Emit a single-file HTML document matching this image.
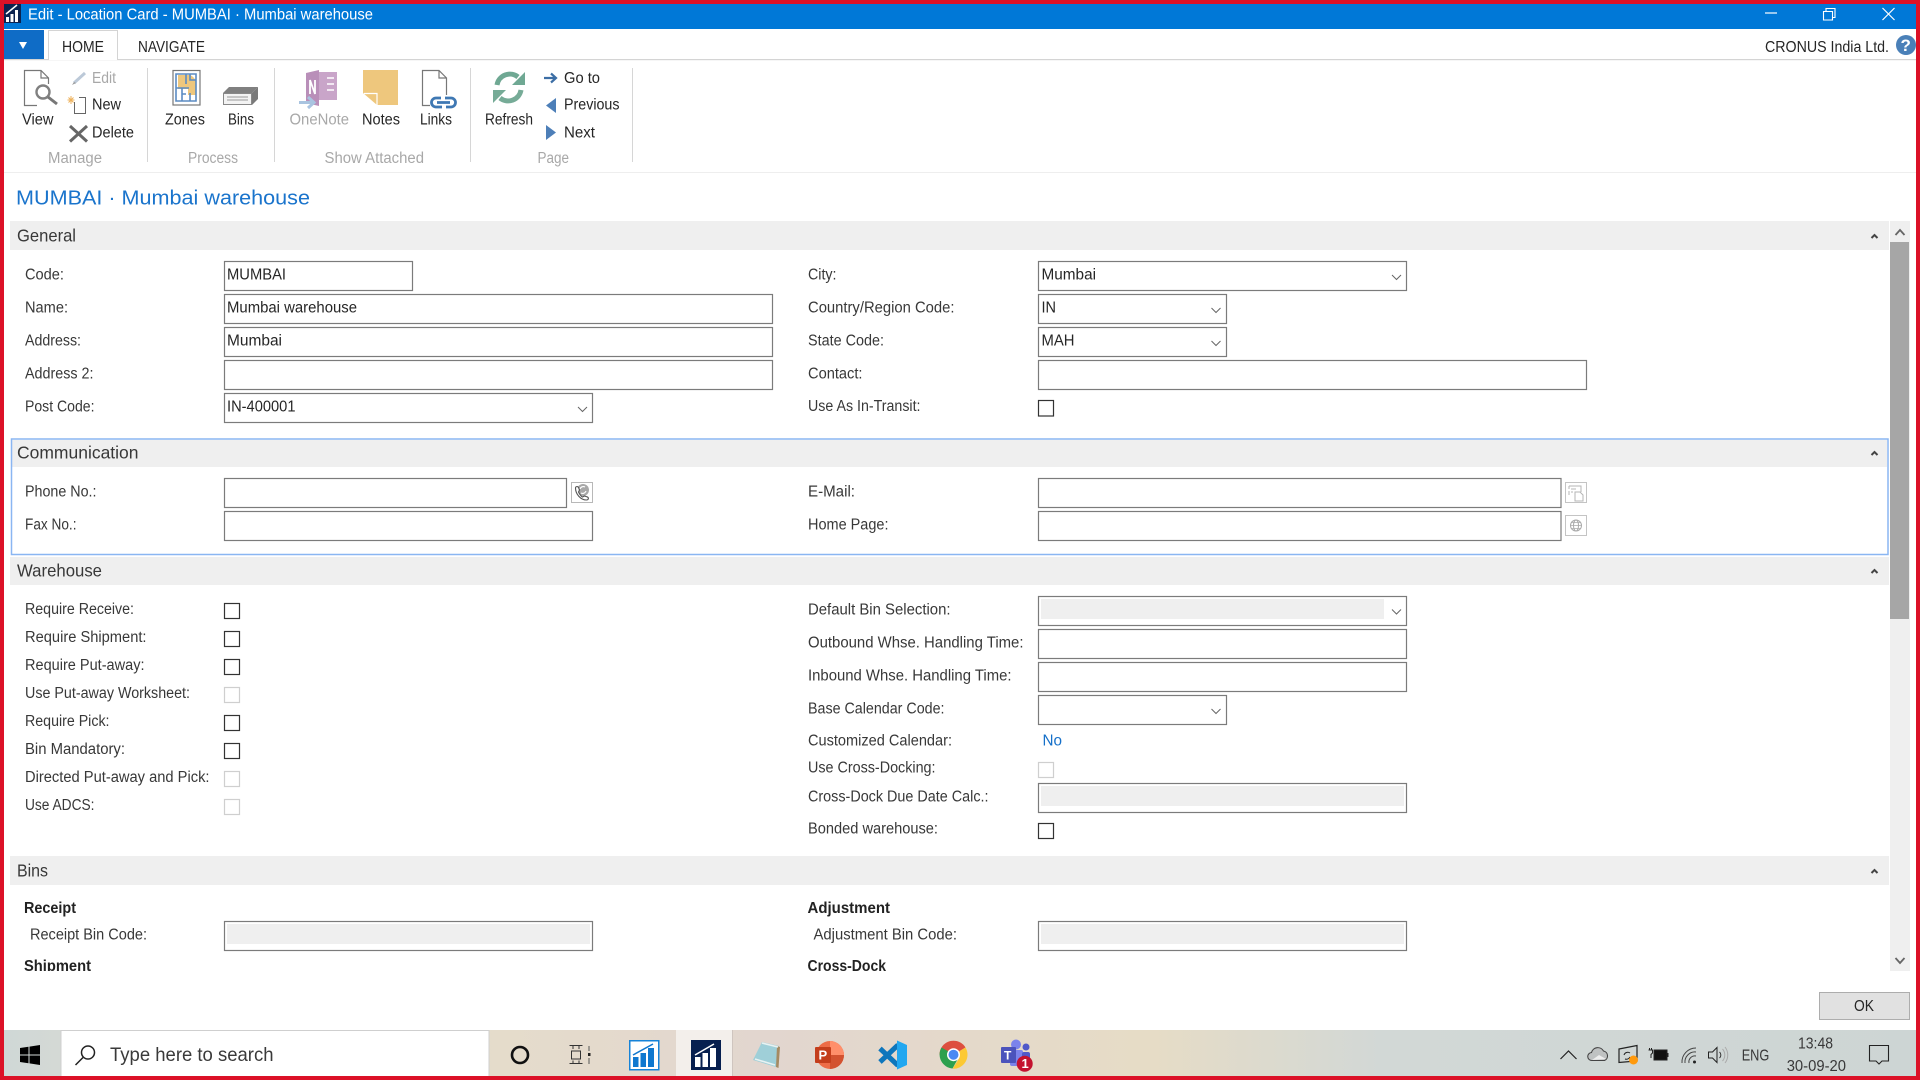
<!DOCTYPE html>
<html lang="en"><head><meta charset="utf-8"><title>Edit - Location Card</title>
<style>
html,body{margin:0;padding:0;background:#fff;width:1920px;height:1080px;overflow:hidden}
svg{display:block;position:absolute;left:0;top:0}
text{font-family:"Liberation Sans",sans-serif;font-size:15.5px;fill:#383838;transform:translateY(-.4px)}
.g{fill:#a8a8a8}.k{fill:#262626}
.h{font-size:17.5px;fill:#383838}
.b{font-weight:bold;fill:#222}
.f{fill:#fff;stroke:#7b7b7b;stroke-width:1.2}
.c{fill:#fff;stroke:#333;stroke-width:1.2}
.d{fill:#fff;stroke:#cfcfcf;stroke-width:1.2}
.v{fill:none;stroke:#666;stroke-width:1}
.u{fill:none;stroke:#444;stroke-width:2}
.w{fill:#efefef}
</style></head><body>
<svg width="1920" height="1080" viewBox="0 0 1920 1080" xmlns="http://www.w3.org/2000/svg">
<defs><linearGradient id="tb" x1="0" x2="1" y1="0" y2="0">
<stop offset="0" stop-color="#cfd7d6"/><stop offset=".03" stop-color="#d4d9d5"/><stop offset=".26" stop-color="#e5dccb"/><stop offset=".40" stop-color="#e2d6cf"/><stop offset=".6" stop-color="#e6dcc6"/><stop offset=".72" stop-color="#d2d8d6"/><stop offset="1" stop-color="#cdd5d4"/></linearGradient></defs>
<rect width="1920" height="1080" fill="#fff"/>
<!-- title bar -->
<rect x="0" y="4" width="1920" height="25" fill="#0078d7"/>
<rect x="4" y="4" width="17" height="19" fill="#0b2350"/>
<path d="M6 22v-5h3v5zM10.500 22v-8h3v8zM15 22V10h3v12z" fill="#fff"/><path d="M6 14l11-9" stroke="#fff" stroke-width="1.500"/>
<text x="28" y="20" textLength="345" lengthAdjust="spacingAndGlyphs" style="fill:#fff">Edit - Location Card - MUMBAI · Mumbai warehouse</text>
<path d="M1765 13h12" stroke="#fff" stroke-width="1.200"/>
<path d="M1823.500 11.500h9v8.500h-9zM1826 11.500v-3h9v9h-2.500" fill="none" stroke="#fff" stroke-width="1.100"/>
<path d="M1882.500 8l12 12M1894.500 8l-12 12" stroke="#fff" stroke-width="1.200"/>
<!-- tabs -->
<rect x="0" y="59" width="1920" height="1.200" fill="#d4d4d4"/>
<rect x="4" y="30" width="40" height="29" fill="#0f6cc6"/><path d="M19 42h8l-4 7z" fill="#fff"/>
<path d="M48.500 60V30.500H117.500V60" fill="#fff" stroke="#d4d4d4"/>
<text x="62" y="52.500" textLength="42" lengthAdjust="spacingAndGlyphs" class="k">HOME</text>
<text x="138" y="52.500" textLength="67" lengthAdjust="spacingAndGlyphs" class="k">NAVIGATE</text>
<text x="1765" y="52.500" textLength="124" lengthAdjust="spacingAndGlyphs" class="k">CRONUS India Ltd.</text>
<circle cx="1906" cy="45" r="10" fill="#4a80b8"/><text x="1900.500" y="51.500" style="font-size:17px;font-weight:bold;fill:#fff">?</text>
<!-- ribbon -->
<path d="M147.500 68v94M274.500 68v94M470.500 68v94M632.500 68v94" stroke="#d6d6d6" stroke-width="1"/>
<rect x="4" y="172" width="1912" height="1" fill="#eeeeee"/>
<path d="M37 105.500H24.500V70.500H41L48.500 78V84M41 70.500V78H48.500" fill="none" stroke="#777" stroke-width="1.200"/>
<circle cx="43" cy="92" r="6.500" fill="#fff" stroke="#808080" stroke-width="2.400"/><path d="M48 97l9 7" stroke="#777" stroke-width="3"/>
<text x="22" y="125" textLength="31.500" lengthAdjust="spacingAndGlyphs" class="k">View</text>
<path d="M74 83l11-10" stroke="#bcc9d8" stroke-width="3"/><path d="M72 85l2-3 2 1z" fill="#999"/>
<text x="92" y="83.500" textLength="24" lengthAdjust="spacingAndGlyphs" class="g">Edit</text>
<path d="M74.500 102V113.500H85.500V97.500H79" fill="none" stroke="#666"/><path d="M71 96v8M67.500 100h7M68.500 97.500l5 5M73.500 97.500l-5 5" stroke="#eeb25c" stroke-width="1"/>
<text x="92" y="110" textLength="29" lengthAdjust="spacingAndGlyphs" class="k">New</text>
<path d="M70 126l17 15.500M87 126l-17 15.500" stroke="#666" stroke-width="3"/>
<text x="92" y="138" textLength="42" lengthAdjust="spacingAndGlyphs" class="k">Delete</text>
<text x="48" y="163.500" textLength="54" lengthAdjust="spacingAndGlyphs" class="g">Manage</text>
<!-- zones -->
<rect x="173" y="70.500" width="27" height="34.500" fill="#fff" stroke="#777" stroke-width="1.200"/>
<path d="M178 75h12a9 9 0 0 1 6 8v12h-8v-6h-10z" fill="#eec77d"/>
<path d="M176 74h20v27h-20zM176 88h13M186 74v10M190 74v6h6M182 88v13M190 93v8M182 94h4" fill="none" stroke="#5b8bc2" stroke-width="1.600"/>
<text x="165" y="125" textLength="40" lengthAdjust="spacingAndGlyphs" class="k">Zones</text>
<path d="M223 93l6-6h29l-6 6z" fill="#808080"/><path d="M252 93l6-6v12l-6 6z" fill="#7a7a7a"/>
<rect x="223.500" y="93.500" width="28" height="11" fill="#f3f3f3" stroke="#888"/><path d="M227 97h21M227 100h21" stroke="#999"/>
<text x="228" y="125" textLength="26" lengthAdjust="spacingAndGlyphs" class="k">Bins</text>
<text x="188" y="163.500" textLength="50" lengthAdjust="spacingAndGlyphs" class="g">Process</text>
<!-- onenote -->
<path d="M318 72h19v28h-19z" fill="#c9a5c9"/><path d="M306 73l13-3v36l-13-3z" fill="#b98fb9"/><path d="M310 94V80l5 14V80" fill="none" stroke="#fff" stroke-width="1.800"/>
<path d="M327 78h7M327 84h7M327 90h7" stroke="#fff" stroke-width="1.500"/>
<path d="M299 102.500h13M308 97l6 5.500-6 5.500" fill="none" stroke="#a9c4e0" stroke-width="3"/>
<text x="289.500" y="125" textLength="59.500" lengthAdjust="spacingAndGlyphs" class="g">OneNote</text>
<path d="M363 70H398V105H377L363 93Z" fill="#eec77d"/><path d="M377 105V93.500H364" fill="none" stroke="#fff" stroke-width="1.200"/>
<text x="362" y="125" textLength="38" lengthAdjust="spacingAndGlyphs" class="k">Notes</text>
<path d="M430 105.500H422.500V70.500H439L446.500 78V95M439 70.500V78H446.500" fill="none" stroke="#777" stroke-width="1.200"/>
<path d="M441 98h-5a4.500 4.500 0 0 0 0 9h6M446 107h5a4.500 4.500 0 0 0 0-9h-6M437 102.500h13" fill="none" stroke="#3f78b3" stroke-width="2.800"/>
<text x="420" y="125" textLength="32" lengthAdjust="spacingAndGlyphs" class="k">Links</text>
<text x="324.500" y="163.500" textLength="99.500" lengthAdjust="spacingAndGlyphs" class="g">Show Attached</text>
<!-- refresh -->
<path d="M497 85a13 13 0 0 1 21-8" fill="none" stroke="#6fa893" stroke-width="5"/><path d="M525 72v13h-13z" fill="#6fa893"/>
<path d="M521 90a13 13 0 0 1-21 8" fill="none" stroke="#76ab97" stroke-width="5"/><path d="M493 103V90h13z" fill="#76ab97"/>
<text x="485" y="125" textLength="48" lengthAdjust="spacingAndGlyphs" class="k">Refresh</text>
<path d="M544 78h11M551 73.500l5 4.500-5 4.500" fill="none" stroke="#3c6ea5" stroke-width="2.200"/>
<text x="564" y="83.500" textLength="36" lengthAdjust="spacingAndGlyphs" class="k">Go to</text>
<path d="M546 105.500l10-7.500v15z" fill="#4d7fb8"/>
<text x="564" y="110" textLength="55.500" lengthAdjust="spacingAndGlyphs" class="k">Previous</text>
<path d="M546 125l10 7.500-10 7.500z" fill="#4d7fb8"/>
<text x="564" y="138" textLength="31" lengthAdjust="spacingAndGlyphs" class="k">Next</text>
<text x="537.500" y="163.500" textLength="31.500" lengthAdjust="spacingAndGlyphs" class="g">Page</text>
<text x="16" y="204.800" textLength="294" lengthAdjust="spacingAndGlyphs" style="font-size:20.500px;fill:#1a74cc">MUMBAI · Mumbai warehouse</text>
<!-- section headers -->
<rect class="w" x="10" y="221" width="1879" height="29"/>
<rect class="w" x="12" y="440" width="1875" height="27"/>
<rect class="w" x="10" y="557" width="1879" height="28"/>
<rect class="w" x="10" y="856" width="1879" height="29"/>
<rect x="11.500" y="439" width="1876.500" height="115.500" fill="none" stroke="#8ab6f2" stroke-width="1.500"/>
<text class="h" x="17" y="242" textLength="59" lengthAdjust="spacingAndGlyphs">General</text>
<text class="h" x="17" y="459" textLength="121.500" lengthAdjust="spacingAndGlyphs">Communication</text>
<text class="h" x="17" y="577" textLength="85" lengthAdjust="spacingAndGlyphs">Warehouse</text>
<text class="h" x="17" y="877" textLength="31" lengthAdjust="spacingAndGlyphs">Bins</text>
<path class="u" d="M1871.500 238l3-3 3 3M1871.500 455l3-3 3 3M1871.500 573l3-3 3 3M1871.500 873l3-3 3 3"/>
<!-- general -->
<text x="25" y="280" textLength="39" lengthAdjust="spacingAndGlyphs">Code:</text>
<text x="25" y="313" textLength="43" lengthAdjust="spacingAndGlyphs">Name:</text>
<text x="25" y="346" textLength="56" lengthAdjust="spacingAndGlyphs">Address:</text>
<text x="25" y="379" textLength="68.500" lengthAdjust="spacingAndGlyphs">Address 2:</text>
<text x="25" y="412" textLength="69.500" lengthAdjust="spacingAndGlyphs">Post Code:</text>
<rect class="f" x="224.500" y="261.500" width="188" height="29"/>
<rect class="f" x="224.500" y="294.500" width="548" height="29"/>
<rect class="f" x="224.500" y="327.500" width="548" height="29"/>
<rect class="f" x="224.500" y="360.500" width="548" height="29"/>
<rect class="f" x="224.500" y="393.500" width="368" height="29"/>
<text class="k" x="227" y="280" textLength="59" lengthAdjust="spacingAndGlyphs">MUMBAI</text>
<text class="k" x="227" y="313" textLength="130" lengthAdjust="spacingAndGlyphs">Mumbai warehouse</text>
<text class="k" x="227" y="346" textLength="55" lengthAdjust="spacingAndGlyphs">Mumbai</text>
<text class="k" x="227" y="412" textLength="68.500" lengthAdjust="spacingAndGlyphs">IN-400001</text>
<path class="v" d="M578 407l4.500 4.500 4.500-4.500"/>
<text x="808" y="280" textLength="28.500" lengthAdjust="spacingAndGlyphs">City:</text>
<text x="808" y="313" textLength="146.500" lengthAdjust="spacingAndGlyphs">Country/Region Code:</text>
<text x="808" y="346" textLength="76" lengthAdjust="spacingAndGlyphs">State Code:</text>
<text x="808" y="379" textLength="54.500" lengthAdjust="spacingAndGlyphs">Contact:</text>
<text x="808" y="411.500" textLength="112.500" lengthAdjust="spacingAndGlyphs">Use As In-Transit:</text>
<rect class="f" x="1038.500" y="261.500" width="368" height="29"/>
<rect class="f" x="1038.500" y="294.500" width="188" height="29"/>
<rect class="f" x="1038.500" y="327.500" width="188" height="29"/>
<rect class="f" x="1038.500" y="360.500" width="548" height="29"/>
<text class="k" x="1041.500" y="280" textLength="54.500" lengthAdjust="spacingAndGlyphs">Mumbai</text>
<text class="k" x="1041.500" y="313" textLength="14.500" lengthAdjust="spacingAndGlyphs">IN</text>
<text class="k" x="1041.500" y="346" textLength="33" lengthAdjust="spacingAndGlyphs">MAH</text>
<path class="v" d="M1392 275l4.500 4.500 4.500-4.500M1211.500 308l4.500 4.500 4.500-4.500M1211.500 341l4.500 4.500 4.500-4.500"/>
<rect class="c" x="1038.500" y="400.500" width="15" height="15.500"/>
<!-- communication -->
<text x="25" y="497" textLength="71.500" lengthAdjust="spacingAndGlyphs">Phone No.:</text>
<text x="25" y="530" textLength="51.500" lengthAdjust="spacingAndGlyphs">Fax No.:</text>
<rect class="f" x="224.500" y="478.500" width="342" height="29"/>
<rect class="f" x="224.500" y="511.500" width="368" height="29"/>
<rect x="571.500" y="482.500" width="21" height="20" fill="#fff" stroke="#b8b8b8"/>
<circle cx="583" cy="490" r="6" fill="#a8a8a8"/><path d="M580 489a3.500 3.500 0 0 1 5-2M586 491a3.500 3.500 0 0 1-5 2" fill="none" stroke="#fff" stroke-width="1.200"/>
<path d="M575.500 488c0 6 5 12 11 12 2 0 2.500-2 1-3l-3-1-2 1c-2-1-3-3-4-5l1-2-1-2.500c-1-1.500-3-1-3 .5z" fill="#fff" stroke="#555" stroke-width="1.100"/>
<text x="808" y="497" textLength="47" lengthAdjust="spacingAndGlyphs">E-Mail:</text>
<text x="808" y="530" textLength="80.500" lengthAdjust="spacingAndGlyphs">Home Page:</text>
<rect class="f" x="1038.500" y="478.500" width="522.500" height="29"/>
<rect class="f" x="1038.500" y="511.500" width="522.500" height="29"/>
<rect x="1565.500" y="482.500" width="21" height="20" fill="#fff" stroke="#c4c4c4"/>
<path d="M1569 486h12v6M1569 486v3M1569 491v4M1571 489h5M1571 492h2M1575 492h5l3 3v6h-8z" fill="none" stroke="#b5b5b5"/>
<rect x="1565.500" y="515.500" width="21" height="20" fill="#fff" stroke="#c4c4c4"/>
<circle cx="1576" cy="525.500" r="5.500" fill="none" stroke="#aaa"/><ellipse cx="1576" cy="525.500" rx="2.500" ry="5.500" fill="none" stroke="#aaa"/><path d="M1570.500 525.500h11M1571.500 522.500h9M1571.500 528.500h9" stroke="#aaa" stroke-width=".8"/>
<!-- warehouse left -->
<text x="25" y="614.500" textLength="109" lengthAdjust="spacingAndGlyphs">Require Receive:</text>
<text x="25" y="642.500" textLength="121.500" lengthAdjust="spacingAndGlyphs">Require Shipment:</text>
<text x="25" y="670.500" textLength="119.500" lengthAdjust="spacingAndGlyphs">Require Put-away:</text>
<text x="25" y="698.500" textLength="165" lengthAdjust="spacingAndGlyphs">Use Put-away Worksheet:</text>
<text x="25" y="726.500" textLength="84.500" lengthAdjust="spacingAndGlyphs">Require Pick:</text>
<text x="25" y="754.500" textLength="100" lengthAdjust="spacingAndGlyphs">Bin Mandatory:</text>
<text x="25" y="782.500" textLength="184.500" lengthAdjust="spacingAndGlyphs">Directed Put-away and Pick:</text>
<text x="25" y="810.500" textLength="69.500" lengthAdjust="spacingAndGlyphs">Use ADCS:</text>
<rect class="c" x="224.500" y="603.500" width="15" height="15"/>
<rect class="c" x="224.500" y="631.500" width="15" height="15"/>
<rect class="c" x="224.500" y="659.500" width="15" height="15"/>
<rect class="d" x="224.500" y="687.500" width="15" height="15"/>
<rect class="c" x="224.500" y="715.500" width="15" height="15"/>
<rect class="c" x="224.500" y="743.500" width="15" height="15"/>
<rect class="d" x="224.500" y="771.500" width="15" height="15"/>
<rect class="d" x="224.500" y="799.500" width="15" height="15"/>
<!-- warehouse right -->
<text x="808" y="615" textLength="142.500" lengthAdjust="spacingAndGlyphs">Default Bin Selection:</text>
<text x="808" y="648" textLength="215.500" lengthAdjust="spacingAndGlyphs">Outbound Whse. Handling Time:</text>
<text x="808" y="681" textLength="203.500" lengthAdjust="spacingAndGlyphs">Inbound Whse. Handling Time:</text>
<text x="808" y="714" textLength="136.500" lengthAdjust="spacingAndGlyphs">Base Calendar Code:</text>
<text x="808" y="746" textLength="144" lengthAdjust="spacingAndGlyphs">Customized Calendar:</text>
<text x="808" y="773" textLength="127.500" lengthAdjust="spacingAndGlyphs">Use Cross-Docking:</text>
<text x="808" y="802" textLength="180.500" lengthAdjust="spacingAndGlyphs">Cross-Dock Due Date Calc.:</text>
<text x="808" y="834" textLength="130" lengthAdjust="spacingAndGlyphs">Bonded warehouse:</text>
<rect class="f" x="1038.500" y="596.500" width="368" height="29"/>
<rect class="w" x="1041" y="599" width="343" height="20"/>
<path class="v" d="M1392 609.500l4.500 4.500 4.500-4.500"/>
<rect class="f" x="1038.500" y="629.500" width="368" height="29"/>
<rect class="f" x="1038.500" y="662.500" width="368" height="29"/>
<rect class="f" x="1038.500" y="695.500" width="188" height="29"/>
<path class="v" d="M1211.500 709l4.500 4.500 4.500-4.500"/>
<text x="1042.500" y="746" textLength="19.500" lengthAdjust="spacingAndGlyphs" style="fill:#1670c9">No</text>
<rect class="d" x="1038.500" y="762.500" width="15" height="15"/>
<rect class="f" x="1038.500" y="783.500" width="368" height="29"/>
<rect class="w" x="1041" y="786" width="363" height="20"/>
<rect class="c" x="1038.500" y="823.500" width="15" height="15"/>
<!-- bins -->
<text class="b" x="24" y="913.400" textLength="52" lengthAdjust="spacingAndGlyphs">Receipt</text>
<text x="30" y="940" textLength="117" lengthAdjust="spacingAndGlyphs">Receipt Bin Code:</text>
<rect class="f" x="224.500" y="921.500" width="368" height="29"/>
<rect class="w" x="227" y="924" width="363" height="20"/>
<text class="b" x="24" y="971.500" textLength="67" lengthAdjust="spacingAndGlyphs">Shipment</text>
<text class="b" x="807.500" y="913.400" textLength="82.500" lengthAdjust="spacingAndGlyphs">Adjustment</text>
<text x="813.500" y="940" textLength="143.500" lengthAdjust="spacingAndGlyphs">Adjustment Bin Code:</text>
<rect class="f" x="1038.500" y="921.500" width="368" height="29"/>
<rect class="w" x="1041" y="924" width="363" height="20"/>
<text class="b" x="807.500" y="971.500" textLength="78.500" lengthAdjust="spacingAndGlyphs">Cross-Dock</text>
<rect x="4" y="971" width="1880" height="21" fill="#fff"/>
<!-- scrollbar -->
<rect class="w" x="1890" y="221" width="20" height="750"/>
<rect x="1890" y="242" width="19" height="377" fill="#a6a6a6"/>
<path d="M1895.500 235l4.500-5 4.500 5" fill="none" stroke="#666" stroke-width="1.800"/>
<path d="M1895.500 958l4.500 5 4.500-5" fill="none" stroke="#666" stroke-width="1.800"/>
<!-- ok -->
<rect x="1819.500" y="992.500" width="90" height="27" fill="#e1e1e1" stroke="#adadad"/>
<text class="k" x="1854" y="1011.500" textLength="20" lengthAdjust="spacingAndGlyphs">OK</text>
<!-- taskbar -->
<rect x="0" y="1030" width="1920" height="46" fill="url(#tb)"/>
<path d="M20 1048l8.500-1.200v7.700H20zM29.500 1046.600l10.500-1.600v9.500H29.500zM20 1055.500h8.500v7.700l-8.500-1.200zM29.500 1055.500H40v9.500l-10.500-1.600z" fill="#000"/>
<rect x="61" y="1030.500" width="428" height="46" fill="#fff" stroke="#cfcfcf"/>
<circle cx="88" cy="1052.500" r="6.500" fill="none" stroke="#222" stroke-width="1.500"/><path d="M83 1057.500l-7.500 7.500" stroke="#222" stroke-width="1.500"/>
<text x="110" y="1061.500" textLength="163.500" lengthAdjust="spacingAndGlyphs" style="font-size:19.500px;fill:#3a3a3a">Type here to search</text>
<circle cx="520" cy="1055" r="8" fill="none" stroke="#111" stroke-width="2.600"/>
<path d="M569.500 1045.500h13M569.500 1063.500h13M571.500 1051h9v8h-9z M573 1046v3M579 1046v3M573 1060.500v3M579 1060.500v3" fill="none" stroke="#333" stroke-width="1"/>
<rect x="588" y="1053" width="2.500" height="3" fill="#222"/><path d="M589 1046v5M589 1058v6" stroke="#555"/>
<rect x="629.750" y="1040.750" width="29" height="29" fill="#fff" stroke="#1683d8" stroke-width="1.500"/>
<path d="M633 1067v-10h5.500v10zM640.500 1067v-14h5.500v14zM648 1067v-19h6v19z" fill="#0f78cf"/><path d="M633 1055l20-11" stroke="#0f78cf" stroke-width="1.500"/>
<rect x="676" y="1030" width="57" height="46" fill="#f3efeb"/><rect x="732" y="1030" width="1" height="46" fill="#cfc5bf"/>
<rect x="691" y="1040" width="30" height="30" fill="#071f4f"/>
<path d="M695 1067v-10h5.500v10zM702.500 1067v-14h5.500v14zM710 1067v-19h6v19z" fill="#fff"/><path d="M695 1055l19-11" stroke="#fff" stroke-width="1.500"/>
<path d="M762 1042l17 4-3 21-23-7z" fill="#9fcfd8"/><path d="M777 1046l3 1-1.500 21-2.500-1z" fill="#a58a62"/><path d="M755 1059l20 6M762 1043l16 4" stroke="#e8f2f2" stroke-width="1.600"/>
<circle cx="830" cy="1055" r="14" fill="#ed6c47"/><path d="M830 1041a14 14 0 0 1 14 14h-14z" fill="#ff8f6b"/><path d="M830 1055h14a14 14 0 0 1-14 14z" fill="#d35230"/>
<rect x="815" y="1047" width="16" height="16" rx="1" fill="#c43e1c"/><text x="818.500" y="1060" style="font-size:13px;font-weight:bold;fill:#fff">P</text>
<path d="M880 1048.500l18 17M898 1045l-18 17" stroke="#0e76bc" stroke-width="5" fill="none"/>
<path d="M897 1040.500l10 4.500v20l-10 4.500z" fill="#22a7f0"/>
<path d="M953.500 1054.700m-14 0a14 14 0 0 1 2-7.200 14 14 0 0 1 24 0l-12 7.200z" fill="#dd4f3f"/>
<path d="M941.500 1047.500a14 14 0 0 0 11 21l6-10.800-4-3z" fill="#2da04e"/>
<path d="M965.500 1047.500a14 14 0 0 1-13 21.200l7-11-6-3z" fill="#fcc934"/>
<circle cx="953.500" cy="1054.700" r="6.500" fill="#fff"/><circle cx="953.500" cy="1054.700" r="5" fill="#4a89f3"/>
<circle cx="1016" cy="1044.500" r="5" fill="#7b83eb"/><circle cx="1026" cy="1047" r="3.500" fill="#5059c9"/>
<rect x="1010" y="1050" width="13" height="16" rx="2" fill="#7b83eb"/><rect x="1022" y="1052" width="8" height="10" rx="2" fill="#5059c9"/>
<rect x="1001" y="1047" width="15" height="16" rx="1" fill="#4b53bc"/><text x="1004" y="1060" style="font-size:12px;font-weight:bold;fill:#fff">T</text>
<circle cx="1024.700" cy="1063.700" r="8" fill="#c4122f"/><text x="1021.500" y="1068.500" style="font-size:13px;font-weight:bold;fill:#fff">1</text>
<!-- tray -->
<path d="M1560.500 1059l8-8 8 8" fill="none" stroke="#222" stroke-width="1.200"/>
<path d="M1592 1060.500a4 4 0 0 1-.5-8 6.500 6.500 0 0 1 12-1.500 5 5 0 0 1 1 9.500z" fill="#bfc2c2" stroke="#444" stroke-width="1.100"/><path d="M1592 1060l7-5 7 4" fill="#eee"/>
<path d="M1619 1049l18-3.500v15.500l-18 1.500z" fill="none" stroke="#222" stroke-width="1.200"/><path d="M1624 1055a4 4 0 0 1 6-2M1630 1057a4 4 0 0 1-5 2" fill="none" stroke="#222"/><circle cx="1633.500" cy="1060" r="4.500" fill="#ff9a0e"/>
<rect x="1654" y="1050" width="13" height="10" fill="#111" stroke="#222"/><rect x="1667" y="1053" width="1.500" height="4" fill="#222"/><path d="M1648.500 1050h4v3l-1.500 1.500v3.500M1649.500 1048v2M1651.500 1048v2" fill="none" stroke="#222"/>
<path d="M1682 1063a14 14 0 0 1 14-15M1685 1063a10 10 0 0 1 11-11M1689 1063a6 6 0 0 1 7-7" fill="none" stroke="#444" stroke-width="1"/><circle cx="1694.500" cy="1062" r="1.500" fill="#222"/>
<path d="M1708.500 1052h4l4.500-4.500v15l-4.500-4.500h-4z" fill="none" stroke="#222"/><path d="M1719.500 1052a4 4 0 0 1 0 6" fill="none" stroke="#333"/><path d="M1722.500 1049a9 9 0 0 1 0 12M1725 1047a13 13 0 0 1 0 16" fill="none" stroke="#aaa"/>
<text x="1741.700" y="1061" textLength="27.600" lengthAdjust="spacingAndGlyphs">ENG</text>
<text x="1798" y="1049" textLength="35" lengthAdjust="spacingAndGlyphs">13:48</text>
<text x="1786.700" y="1071.500" textLength="59.300" lengthAdjust="spacingAndGlyphs">30-09-20</text>
<path d="M1869.500 1045.500h19v15.500h-6.500l-3 3-3-3h-6.500z" fill="none" stroke="#222" stroke-width="1.100"/>
<!-- red frame -->
<rect x="0" y="0" width="1920" height="4" fill="#dc1127"/>
<rect x="0" y="0" width="4" height="1080" fill="#dc1127"/>
<rect x="1916" y="0" width="4" height="1080" fill="#dc1127"/>
<rect x="0" y="1076" width="1920" height="4" fill="#dc1127"/>
</svg>
</body></html>
